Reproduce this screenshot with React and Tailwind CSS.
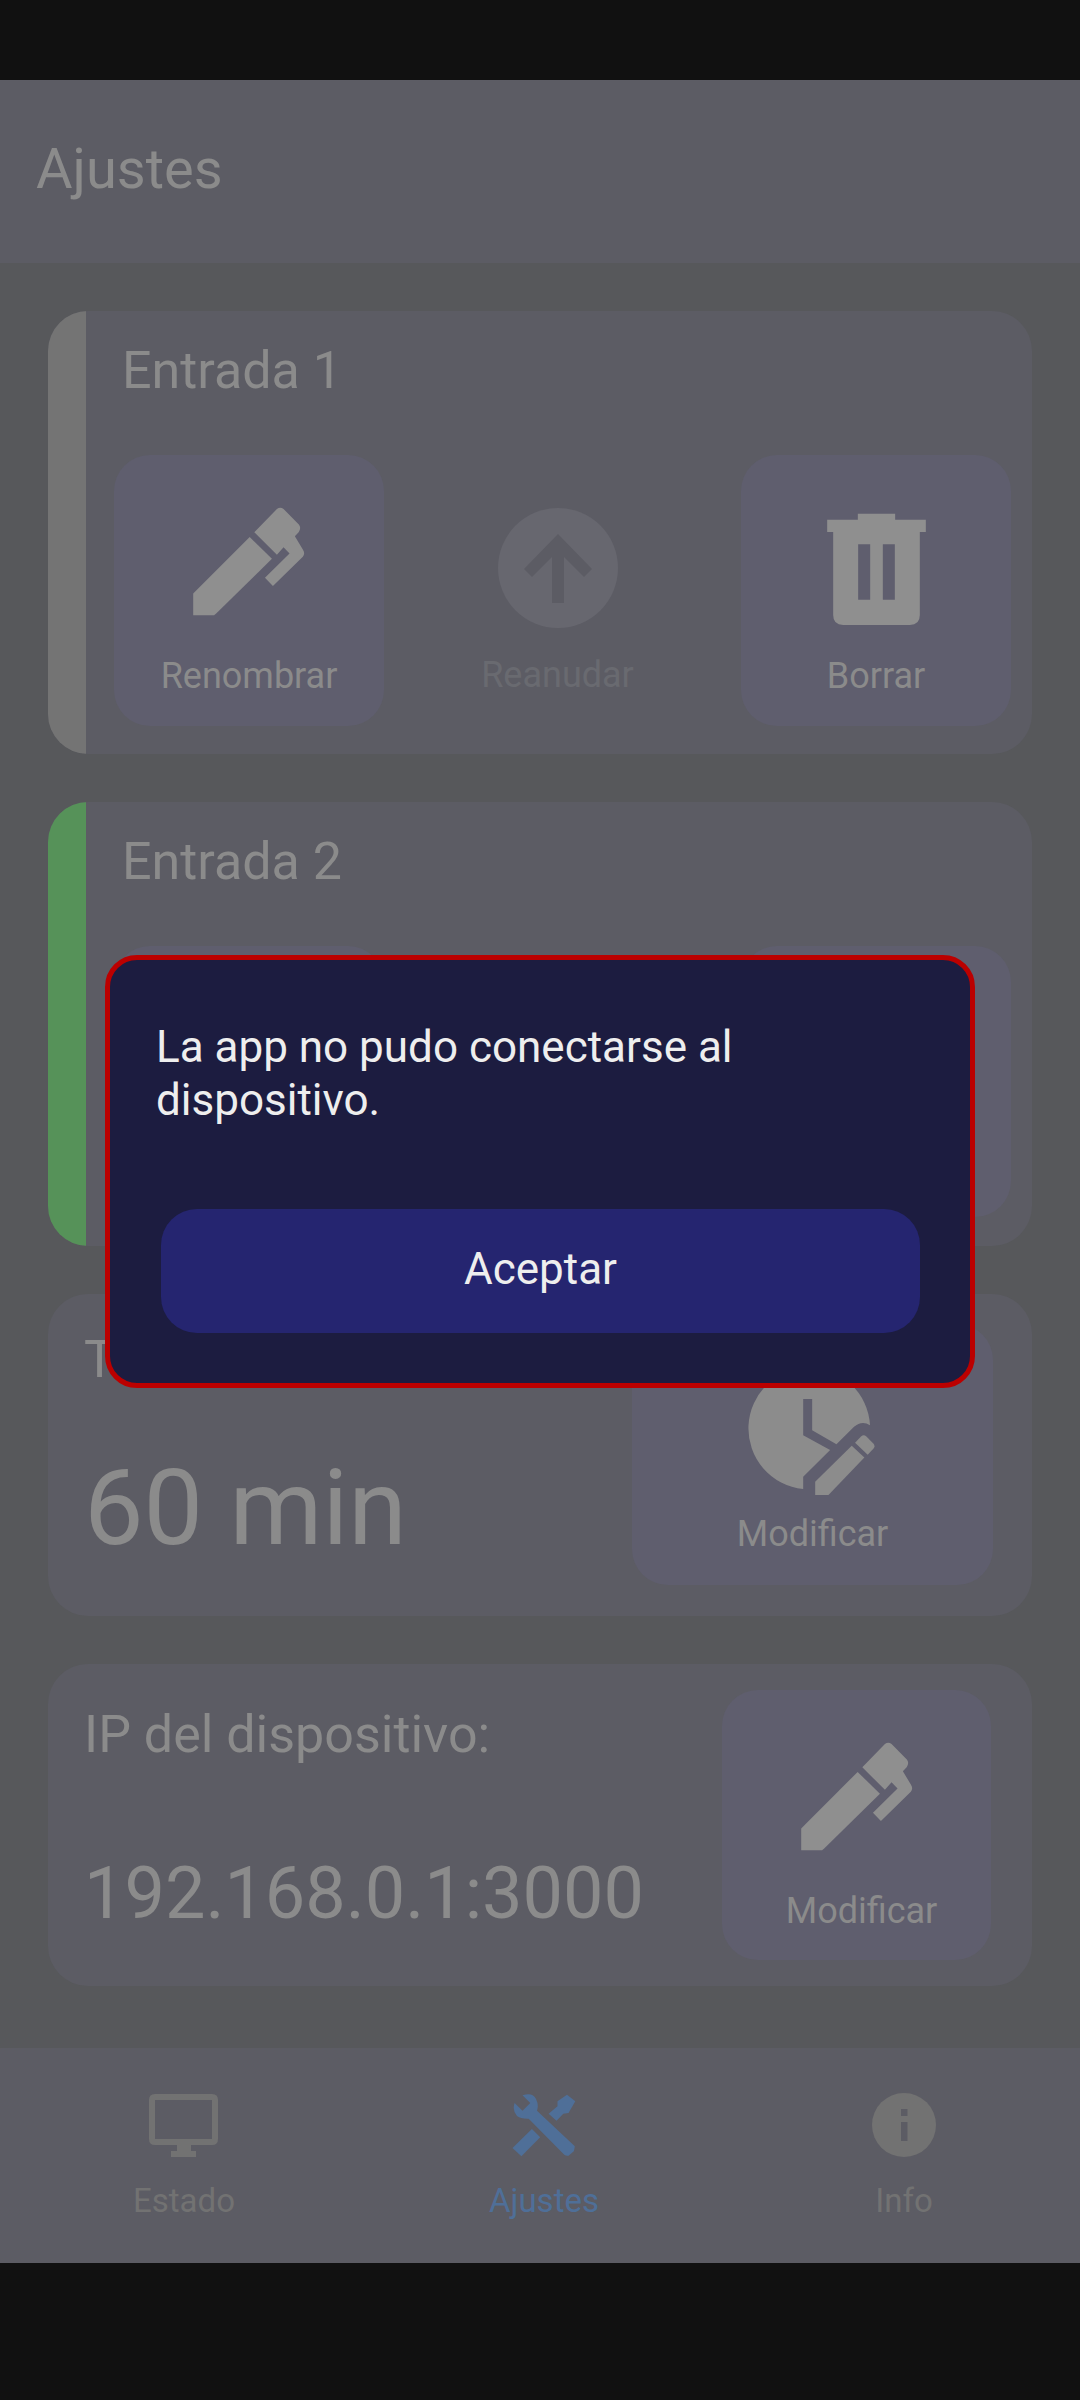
import React from "react";

const Pen = ({ className }) => (
  <svg viewBox="70 52 336 328" className={className} fill="#8f8f8f">
    <path d="M70 378V312L240 142L307 208L140 372L133 378Z" />
    <path d="M254 128L322 58Q332 50 342 58L388 105Q396 115 388 127L376 140L400 180Q408 192 400 202L310 290L286 265L360 192L342 173L322 196Z" />
  </svg>
);

const Trash = ({ className }) => (
  <svg viewBox="1040 68 296 336" className={className} fill="#8f8f8f">
    <path
      fillRule="evenodd"
      d="M1132 70H1244V88H1336V125H1318V374Q1318 404 1288 404H1088Q1058 404 1058 374V125H1040V88H1132ZM1133 162V328H1169V162ZM1207 162V328H1243V162Z"
    />
  </svg>
);

const UpCircle = ({ className }) => (
  <svg viewBox="0 0 120 120" className={className}>
    <circle cx="60" cy="60" r="60" fill="#67676f" />
    <path fill="#5c5c64" d="M60 26L94 61L86 69L66 49V95H54V49L34 69L26 61Z" />
  </svg>
);

const ClockPen = ({ className }) => (
  <svg viewBox="57 -10 380 385" className={className} fill="#8c8c8c">
    <path d="M222 357A183 183 0 1 1 423 165Q398 150 375 170L322 222L249 180V86H222V195L303 240L222 320Z" />
    <path d="M258 375V335L368 227L406 262L298 375Z" />
    <path d="M378 218L396 199Q404 192 412 199L433 220Q440 228 433 236L416 254Z" />
  </svg>
);

const Monitor = ({ className }) => (
  <svg viewBox="0 0 69 63" className={className} fill="#727272">
    <path
      fillRule="evenodd"
      d="M6 0H63Q69 0 69 6V45Q69 51 63 51H6Q0 51 0 45V6Q0 0 6 0ZM6 6V45H63V6Z"
    />
    <path d="M28 51H42V57H47V63H22V57H28Z" />
  </svg>
);

const Tools = ({ className }) => (
  <svg viewBox="0 0 64 63" className={className} fill="#4f6f98">
    <path d="M2.6 9L10.5 16.7L18.3 9L10.5 1.3Q20.9 -2 24 5Q27 11 25 16.7L62.8 52.3Q62.5 55 61.8 57.3L56.5 61.7Q54 62 52.3 60.7L16.7 24.7Q9 25 5 22Q0 16 2.6 9Z" />
    <path d="M55 .7L63.3 7.3L56.5 19L51.3 19.7L44.5 26.7L36.6 19.7L45.5 12.3V7.3Z" />
    <path d="M19.9 35L28.2 43.3L9.4 62.3L.5 54Z" />
  </svg>
);

const Info = ({ className }) => (
  <svg viewBox="0 0 64 64" className={className}>
    <circle cx="32" cy="32" r="32" fill="#727272" />
    <path fill="#5c5c64" d="M29 16H35.5V23H29ZM29 29H35.5V48H29Z" />
  </svg>
);

function ActionButton({ icon, label }) {
  return (
    <div className="w-[270px] h-[271px] rounded-[36px] bg-[#5f5e6e] flex flex-col items-center">
      {icon}
      {label && <span className="mt-auto mb-[30px] text-[36px] leading-[40px] text-[#8b8b8b]">{label}</span>}
    </div>
  );
}

function Entry({ title, barColor, height, children }) {
  return (
    <section className={`${height} rounded-[40px] bg-[#5c5c64] overflow-hidden flex`}>
      <div className={`w-[38px] ${barColor}`} />
      <div className="flex-1 flex flex-col pl-[28px] pr-[21px]">
        <h2 className="pl-[8px] mt-[30px] text-[52px] leading-[60px] font-normal text-[#8b8b8b]">{title}</h2>
        <div className="mt-[54px] flex">{children}</div>
      </div>
    </section>
  );
}

function NavItem({ icon, label, color }) {
  return (
    <div className="flex-1 flex flex-col items-center pt-[45px] pl-[8px]">
      <div className="h-[64px] flex items-center">{icon}</div>
      <span className={`mt-[24px] text-[33px] leading-[40px] ${color}`}>{label}</span>
    </div>
  );
}

export default function App() {
  return (
    <div className="relative w-[1080px] h-[2400px] bg-[#111111] flex flex-col font-['Roboto',sans-serif]">
      <div className="h-[80px]" />
      <header className="h-[183px] bg-[#5c5c64] px-[36px] pb-[6px] flex items-center">
        <h1 className="text-[56px] leading-[64px] font-normal text-[#8b8b8b]">Ajustes</h1>
      </header>
      <main className="h-[1785px] bg-[#57585b] px-[48px] pt-[48px] flex flex-col gap-[48px]">
        <Entry title="Entrada 1" height="h-[443px]" barColor="bg-[#747474]">
          <ActionButton
            icon={<Pen className="mt-[52px] w-[112px] h-[109px]" />}
            label="Renombrar"
          />
          <div className="flex-1 pr-[10px] flex flex-col items-center">
            <UpCircle className="mt-[53px] w-[120px] h-[120px]" />
            <span className="mt-[27px] text-[36px] leading-[40px] text-[#696a70]">Reanudar</span>
          </div>
          <ActionButton
            icon={<Trash className="mt-[58px] w-[99px] h-[112px]" />}
            label="Borrar"
          />
        </Entry>
        <Entry title="Entrada 2" height="h-[444px]" barColor="bg-[#569259]">
          <ActionButton />
          <div className="flex-1" />
          <ActionButton />
        </Entry>
        <section className="h-[322px] rounded-[40px] bg-[#5c5c64] flex pl-[36px] pr-[39px]">
          <div className="flex-1 flex flex-col">
            <h2 className="mt-[36px] text-[52px] leading-[60px] font-normal text-[#8b8b8b]">Tiempo:</h2>
            <p className="mt-[62px] text-[106px] leading-[112px] text-[#8b8b8b]">60 min</p>
          </div>
          <div className="mt-[30px] ml-[-1px] w-[361px] h-[261px] rounded-[36px] bg-[#5f5e6e] flex flex-col items-center">
            <ClockPen className="mt-[43px] mr-[2px] w-[127px] h-[128px]" />
            <span className="mt-auto mb-[31px] text-[36px] leading-[40px] text-[#8b8b8b]">Modificar</span>
          </div>
        </section>
        <section className="h-[322px] rounded-[40px] bg-[#5c5c64] flex pl-[36px] pr-[41px]">
          <div className="flex-1 flex flex-col">
            <h2 className="mt-[41px] text-[52px] leading-[60px] font-normal text-[#8b8b8b]">IP del dispositivo:</h2>
            <p className="mt-[87px] text-[72px] leading-[84px] text-[#8b8b8b]">192.168.0.1:3000</p>
          </div>
          <div className="mt-[26px] w-[269px] h-[270px] rounded-[36px] bg-[#5f5e6e] flex flex-col items-center">
            <Pen className="mt-[52px] w-[112px] h-[109px]" />
            <span className="mt-auto mb-[29px] ml-[10px] text-[36px] leading-[40px] text-[#8b8b8b]">Modificar</span>
          </div>
        </section>
      </main>
      <nav className="h-[215px] bg-[#5c5c64] flex">
        <NavItem icon={<Monitor className="mr-[2px] w-[69px] h-[63px]" />} label="Estado" color="text-[#727272]" />
        <NavItem icon={<Tools className="w-[64px] h-[63px]" />} label="Ajustes" color="text-[#4f6f98]" />
        <NavItem icon={<Info className="w-[64px] h-[64px]" />} label="Info" color="text-[#727272]" />
      </nav>

      <div className="absolute left-[105px] top-[955px] w-[870px] h-[433px] rounded-[32px] border-[5px] border-[#bb0000] bg-[#1c1c40] pl-[46px] pr-[50px]">
        <p className="mt-[61px] text-[44px] leading-[53px] text-[#eeeeee]">
          La app no pudo conectarse al dispositivo.
        </p>
        <button className="mt-[82px] ml-[5px] w-[759px] h-[124px] pb-[5px] rounded-[36px] bg-[#252570] text-[44px] text-[#eeeeee]">
          Aceptar
        </button>
      </div>
    </div>
  );
}
